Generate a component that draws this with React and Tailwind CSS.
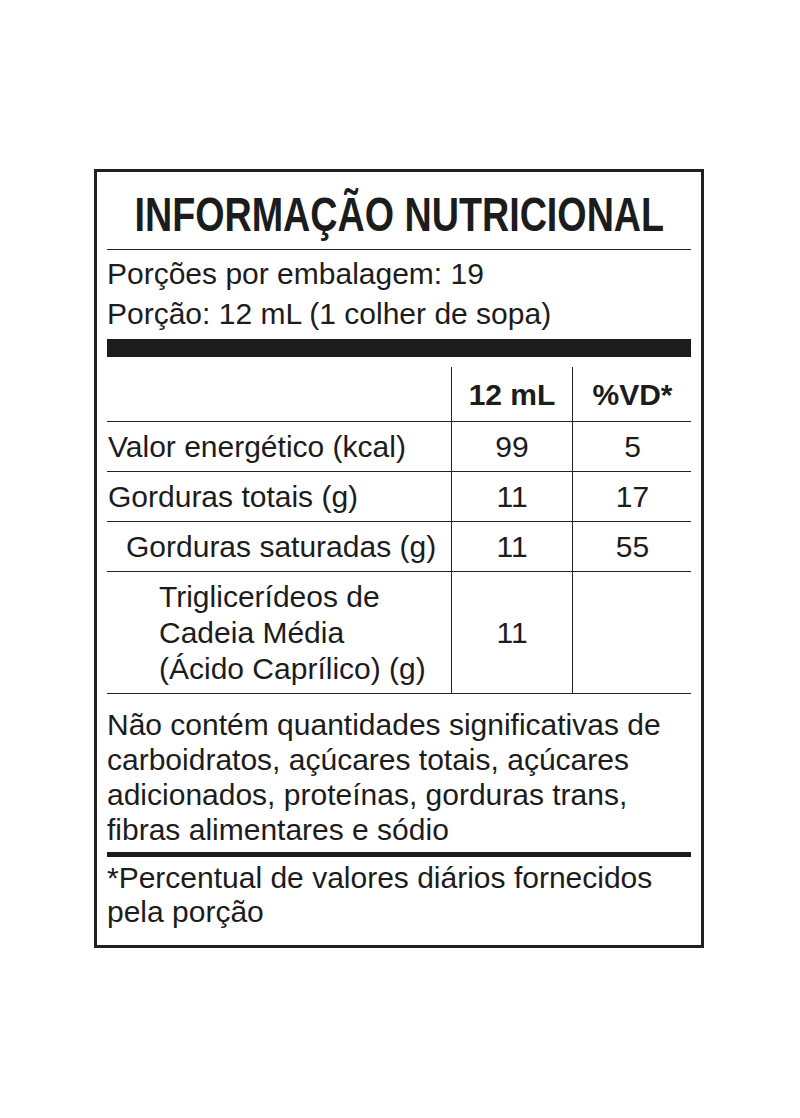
import React from "react";

const font = { fontFamily: '"Liberation Sans", Arial, sans-serif' };

function Row({ label, indent, v1, v2, tall }) {
  return (
    <div className={`grid grid-cols-[344px_121px_120px] shrink-0 border-b border-[#222] ${tall ? "h-[122px]" : "h-[50px]"}`}>
      <div className={`flex items-center ${indent}`}>{label}</div>
      <div className="flex items-center justify-center border-l border-[#222]">{v1}</div>
      <div className="flex items-center justify-center border-l border-[#222]">{v2}</div>
    </div>
  );
}

export default function App() {
  return (
    <div className="w-[800px] h-[1118px] bg-white text-[#1c1c1c]" style={font}>
      <div className="pt-[169px] pl-[94px]">
        <div className="w-[610px] h-[779px] border-[3px] border-[#231f20] px-[10px] pt-[19px] flex flex-col">
          <div className="shrink-0 flex justify-center border-b border-[#222] pb-[10px] text-[48px] leading-[48px] font-bold whitespace-nowrap">
            <span className="inline-block scale-x-[0.785]">INFORMAÇÃO NUTRICIONAL</span>
          </div>
          <div className="shrink-0 pt-[4px] text-[30px] leading-[40px]">
            <div>Porções por embalagem: 19</div>
            <div>Porção: 12 mL (1 colher de sopa)</div>
          </div>
          <div className="shrink-0 mt-[5px] h-[18px] bg-[#1c1c1c]" />
          <div className="shrink-0 mt-[10px] text-[30px] leading-[36px]">
            <div className="grid grid-cols-[344px_121px_120px] h-[55px] border-b border-[#222] font-bold">
              <div />
              <div className="flex items-end justify-center pb-[8px] border-l border-[#222]">12 mL</div>
              <div className="flex items-end justify-center pb-[8px] border-l border-[#222]">%VD*</div>
            </div>
            <Row label="Valor energético (kcal)" indent="pl-[1px]" v1="99" v2="5" />
            <Row label="Gorduras totais (g)" indent="pl-[1px]" v1="11" v2="17" />
            <Row label="Gorduras saturadas (g)" indent="pl-[19px]" v1="11" v2="55" />
            <Row
              label={
                <div>
                  <div>Triglicerídeos de</div>
                  <div>Cadeia Média</div>
                  <div>(Ácido Caprílico) (g)</div>
                </div>
              }
              indent="pl-[52px]"
              v1="11"
              v2=""
              tall
            />
          </div>
          <div className="shrink-0 pt-[13px] text-[30px] leading-[35px]">
            <div>Não contém quantidades significativas de</div>
            <div>carboidratos, açúcares totais, açúcares</div>
            <div>adicionados, proteínas, gorduras trans,</div>
            <div>fibras alimentares e sódio</div>
          </div>
          <div className="shrink-0 mt-[5px] h-[5px] bg-[#1c1c1c]" />
          <div className="shrink-0 pt-[4px] text-[30px] leading-[34px]">
            <div>*Percentual de valores diários fornecidos</div>
            <div>pela porção</div>
          </div>
        </div>
      </div>
    </div>
  );
}
